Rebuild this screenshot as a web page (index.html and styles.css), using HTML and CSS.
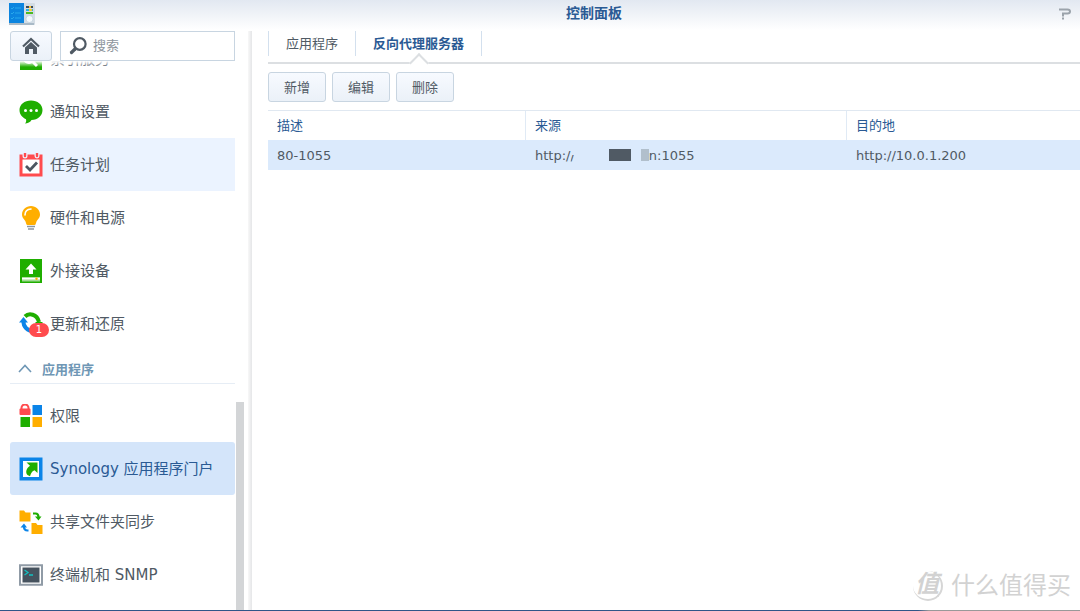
FILE: index.html
```html
<!DOCTYPE html>
<html lang="zh-CN">
<head>
<meta charset="utf-8">
<title>控制面板</title>
<link rel="stylesheet" href="styles.css">
</head>
<body>
<div class="window">
  <header class="titlebar">
    <svg class="app-icon" viewBox="0 0 26 22" aria-hidden="true">
      <rect x="14" width="12" height="22" rx="1" fill="#d3dce4"/>
      <rect width="15" height="21" fill="#0b84df"/>
      <rect y="20" width="25" height="2" fill="#a9bac7"/>
      <path d="M2 5l1 1 2-2M2 10l1 1 2-2M2 15l1 1 2-2M6 5h6M6 10h6M6 15h6" fill="none" stroke="#35b8f2" stroke-width=".7"/>
      <path d="M17 4h7" stroke="#3c4a57" stroke-width="2"/>
      <path d="M17 7h7" stroke="#27b4e8" stroke-width="2"/>
      <path d="M17 10h7" stroke="#4dba22" stroke-width="2"/>
      <path d="M20 4h2M20 7h3" stroke="#ffc52e" stroke-width="2"/>
      <circle cx="20.500" cy="16" r="3.500" fill="#f5f9fc" stroke="#b4c7d6" stroke-width=".6"/>
    </svg>
    <h1 class="title">控制面板</h1>
    <button class="help" type="button" aria-label="帮助">
      <svg viewBox="0 0 13 12" aria-hidden="true"><path d="M1 1.500h8.500Q12 1.500 12 3.500T9.500 5.500H5V8.500M5 9.500V11.500" fill="none" stroke="#9ba3ab" stroke-width="2"/></svg>
    </button>
  </header>

  <div class="body">
    <aside class="sidebar">
      <div class="search-row">
        <button class="btn home" type="button" aria-label="主页">
          <svg viewBox="0 0 18 18" aria-hidden="true"><path d="M1 9.500L9 2l8 7.500" fill="none" stroke="#505a64" stroke-width="2.200"/><path d="M3 10.500L9 5l6 5.500V17h-4v-5H7v5H3z" fill="#505a64"/></svg>
        </button>
        <label class="search">
          <svg viewBox="0 0 18 18" aria-hidden="true"><circle cx="10.800" cy="7" r="5.800" fill="none" stroke="#505a64" stroke-width="2.200"/><path d="M6 12L2.500 15.500" stroke="#505a64" stroke-width="3.200" stroke-linecap="round"/></svg>
          <input type="search" placeholder="搜索" aria-label="搜索">
        </label>
      </div>

      <nav class="nav">
        <a class="item" href="#">
          <svg viewBox="0 0 24 24" aria-hidden="true"><rect x="1" y="1" width="22" height="22" fill="#1fae00"/><circle cx="10" cy="11" r="6" fill="#fff"/><path d="M14 15l4 4" stroke="#fff" stroke-width="3"/></svg>
          <span>索引服务</span>
        </a>
        <a class="item" href="#">
          <svg viewBox="0 0 24 24" aria-hidden="true"><path d="M12 .500c6.500 0 11.500 4 11.500 9.500S19 20 12.500 20c-1 2-4 3.500-6.500 3.500 1-1 1.500-2.500 1-4.300C3 17.500.500 14 .500 10 .500 4.500 5.500.500 12 .500z" fill="#1fae00"/><g fill="#fff"><circle cx="6.500" cy="10.500" r="1.500"/><circle cx="12" cy="10.500" r="1.500"/><circle cx="17.500" cy="10.500" r="1.500"/></g></svg>
          <span>通知设置</span>
        </a>
        <a class="item hover" href="#">
          <svg viewBox="0 0 24 24" aria-hidden="true"><path d="M.500 1.500h23v22H.500z" fill="#ff4b4e"/><path d="M3.500 6.500h17v14h-17z" fill="#fff"/><path d="M3.500 0h5v3a2.500 2.500 0 0 1-5 0zM15.500 0h5v3a2.500 2.500 0 0 1-5 0z" fill="#ebf3ff"/><path d="M6 0v3M18 0v3" stroke="#ff4b4e" stroke-width="2.400" stroke-linecap="round"/><path d="M7 13l4 4 7-7.500" fill="none" stroke="#4c5661" stroke-width="2.800"/></svg>
          <span>任务计划</span>
        </a>
        <a class="item" href="#">
          <svg viewBox="0 0 24 24" aria-hidden="true"><path d="M12 0c5 0 9 3.700 9 8.500 0 3.500-2.500 5-3.500 7-.700 1.500-.500 3.500-2 3.500h-7c-1.500 0-1.300-2-2-3.500C5.500 13.500 3 12 3 8.500 3 3.700 7 0 12 0z" fill="#ffae00"/><path d="M6 9c0-3.500 2.500-5.800 6-6" fill="none" stroke="#fff" stroke-width="1.600" stroke-linecap="round"/><path d="M8 20.500h8M9 23h6" stroke="#8c96a0" stroke-width="1.500"/></svg>
          <span>硬件和电源</span>
        </a>
        <a class="item" href="#">
          <svg viewBox="0 0 24 24" aria-hidden="true"><path d="M1 0h22v24H1z" fill="#1fae00"/><path d="M12 4.500l5.500 6H14V15h-4v-4.500H6.500z" fill="#fff"/><path d="M3 18.500h18v4H3z" fill="#a1db93"/><path d="M3 18.500h18v2H3z" fill="#fff"/><circle cx="17.500" cy="19.800" r="1.200" fill="#ffae00"/></svg>
          <span>外接设备</span>
        </a>
        <a class="item" href="#">
          <span class="badged">
            <svg viewBox="0 0 24 24" aria-hidden="true"><path d="M6 4.500C10 .500 18 2 20 10" fill="none" stroke="#1fae00" stroke-width="4"/><path d="M16 10h8l-4 4z" fill="#1fae00"/><path d="M4.500 9c-.500 6 4.500 10 9.500 10" fill="none" stroke="#0b84e8" stroke-width="4"/><path d="M0 10.500L4.500 5 9 10.500z" fill="#0b84e8"/></svg>
            <b class="badge">1</b>
          </span>
          <span>更新和还原</span>
        </a>
        <button class="group" type="button" aria-expanded="true">
          <svg viewBox="0 0 14 9" aria-hidden="true"><path d="M1 8l6-6.500L13 8" fill="none" stroke="#6f97b5" stroke-width="1.600"/></svg>
          <span>应用程序</span>
        </button>
        <a class="item" href="#">
          <svg viewBox="0 0 24 24" aria-hidden="true"><path d="M2.500 6V4a3.500 3.500 0 0 1 7 0v2" fill="none" stroke="#ff4b4e" stroke-width="2"/><rect x=".500" y="4.500" width="11" height="6.500" rx="1" fill="#ff4b4e"/><path d="M13.500 1H23v10h-9.500z" fill="#0b84e8"/><path d="M1.500 13H11v10H1.500z" fill="#1fae00"/><path d="M13.500 13H23v10h-9.500z" fill="#ffae00"/></svg>
          <span>权限</span>
        </a>
        <a class="item selected" href="#" aria-current="page">
          <svg viewBox="0 0 24 24" aria-hidden="true"><path d="M.500.500h23v23H.500z" fill="#0b84e8"/><path d="M4 4h16v16H4z" fill="#fff"/><path d="M7.500 5.500H18.500V16l-3-2.800c-3 1.300-3.500 3.300-4.500 6L8.500 18c-2.500-2.500-1-7 2.500-9.300z" fill="#1fae00"/></svg>
          <span>Synology 应用程序门户</span>
        </a>
        <a class="item" href="#">
          <svg viewBox="0 0 24 24" aria-hidden="true"><path d="M.500.500H5l1.500 2h5v9h-11zM12.500 13H17l1.500 2h5v9h-11z" fill="#ffae00"/><path d="M14 3.500h2.500q3 0 3 4" fill="none" stroke="#1fae00" stroke-width="2.200"/><path d="M16 6.500h6.500L19.500 10.500z" fill="#1fae00"/><path d="M9.500 20.500h-1q-3.500 0-3.500-4" fill="none" stroke="#0b84e8" stroke-width="2.200"/><path d="M1.500 17.500h6.500L5 13.500z" fill="#0b84e8"/></svg>
          <span>共享文件夹同步</span>
        </a>
        <a class="item" href="#">
          <svg viewBox="0 0 24 24" aria-hidden="true"><path d="M1 2.200h22v19.500H1z" fill="#fff" stroke="#909ba6" stroke-width="2"/><path d="M3.500 4.500h17v15h-17z" fill="#46525e"/><path d="M5.500 7l3.500 2.500L5.500 12M10 12h4" fill="none" stroke="#13c0c0" stroke-width="1.300"/></svg>
          <span>终端机和 SNMP</span>
        </a>
      </nav>
      <div class="scroll-thumb"></div>
    </aside>

    <main class="main">
      <div class="tabs" role="tablist">
        <button class="tab" type="button" role="tab">应用程序</button>
        <button class="tab active" type="button" role="tab" aria-selected="true">反向代理服务器</button>
      </div>
      <div class="toolbar">
        <button class="btn" type="button">新增</button>
        <button class="btn" type="button">编辑</button>
        <button class="btn" type="button">删除</button>
      </div>
      <table class="grid">
        <colgroup><col class="col-desc"><col class="col-source"><col></colgroup>
        <thead><tr><th>描述</th><th>来源</th><th>目的地</th></tr></thead>
        <tbody><tr>
          <td>80-1055</td>
          <td><span class="masked"><span>http:/<span class="cut">/</span></span><i class="mask dark"></i><i class="mask light"></i><span>n:1055</span></span></td>
          <td>http://10.0.1.200</td>
        </tr></tbody>
      </table>
    </main>
  </div>
  <div class="watermark"><span class="seal">值</span><span>什么值得买</span></div>
</div>
</body>
</html>
```
FILE: styles.css
```css
* {
  box-sizing: border-box;
}

body {
  margin: 0;
  font-family: "DejaVu Sans", "Noto Sans CJK SC", sans-serif;
  font-size: 13px;
  color: #505a64;
}

button,
input {
  font: inherit;
  color: inherit;
}

a {
  color: inherit;
  text-decoration: none;
}

svg {
  display: block;
  flex: none;
}

.window {
  position: relative;
  display: flex;
  flex-direction: column;
  height: 100vh;
  overflow: hidden;
  background: linear-gradient(#e2e8f1, #fff 30px);
}

.window::after {
  content: "";
  flex: none;
  height: 1px;
  background: linear-gradient(90deg, #2f5688 85%, #999 86%);
}

.titlebar {
  display: grid;
  grid-template-columns: 1fr auto 1fr;
  align-items: center;
  height: 27px;
  padding: 0 9px;
}

.app-icon {
  width: 26px;
  height: 22px;
}

.title {
  margin: 0 0 0 108px;
  padding-bottom: 2px;
  font-size: 14px;
  line-height: 20px;
  color: #2a5a94;
}

.help {
  justify-self: end;
  padding: 0;
  border: 0;
  background: none;
}

.help svg {
  width: 13px;
  height: 12px;
}

.body {
  display: flex;
  flex: 1;
  min-height: 0;
  padding-top: 4px;
}

.sidebar {
  position: relative;
  display: flex;
  flex-direction: column;
  flex: none;
  width: 252px;
  padding: 0 17px 0 10px;
}

.sidebar::after {
  content: "";
  position: absolute;
  inset: 0 0 0 auto;
  width: 4px;
  background: linear-gradient(90deg, #f8f8f8, #e5e6e8);
}

.search-row {
  display: flex;
  gap: 8px;
  height: 30px;
}

.btn {
  height: 30px;
  padding: 0 15px 2px;
  border: 1px solid #c8d5e1;
  border-radius: 3px;
  background: linear-gradient(#f7faff, #ebf1f8);
}

.home {
  width: 42px;
  padding: 0 11px;
}

.home svg,
.search svg {
  width: 18px;
  height: 18px;
}

.search {
  display: flex;
  flex: 1;
  align-items: center;
  gap: 6px;
  min-width: 0;
  padding: 0 8px;
  border: 1px solid #c8d5e1;
  background: #fff;
}

.search input {
  flex: 1;
  min-width: 0;
  padding: 0 0 2px;
  border: 0;
  outline: 0;
  background: none;
}

.search input::placeholder {
  color: #8d959d;
}

.nav {
  position: relative;
  display: flex;
  flex: 1;
  flex-direction: column;
  justify-content: flex-end;
  min-height: 0;
  padding-bottom: 9px;
  overflow: hidden;
}

.nav::before {
  content: "";
  position: absolute;
  inset: 0 0 auto;
  z-index: 1;
  height: 6px;
  background: linear-gradient(#fff, #fff0);
}

.item {
  display: flex;
  flex: none;
  align-items: center;
  gap: 7px;
  height: 53px;
  padding-left: 9px;
  font-size: 15px;
  white-space: nowrap;
}

.item > span:last-child {
  padding-bottom: 2px;
}

.item svg {
  width: 24px;
  height: 24px;
}

.hover {
  background: #ebf3ff;
}

.selected {
  border-radius: 3px;
  background: #d4e5fa;
  color: #2a5a94;
}

.badged {
  position: relative;
}

.badge {
  position: absolute;
  top: 11px;
  left: 10px;
  width: 20px;
  border-radius: 7px;
  background: #ff4b4e;
  color: #fff;
  font-size: 10px;
  font-weight: 400;
  line-height: 14px;
  text-align: center;
}

.group {
  display: flex;
  flex: none;
  align-items: center;
  gap: 10px;
  height: 34px;
  margin-bottom: 5px;
  padding: 4px 0 0 8px;
  border: 0;
  border-bottom: 1px solid #e6edf5;
  background: none;
  color: #6f97b5;
  font-weight: 700;
}

.group svg {
  width: 14px;
  height: 9px;
}

.scroll-thumb {
  position: absolute;
  right: 8px;
  bottom: 0;
  width: 8px;
  height: 36%;
  background: #d3d5d7;
}

.main {
  flex: 1;
  min-width: 0;
  padding-left: 16px;
}

.tabs {
  display: flex;
  height: 33px;
  padding-bottom: 6px;
  border-bottom: 2px solid #dcdfe2;
}

.tab {
  position: relative;
  padding: 0 17px 2px;
  border: 0;
  border-right: 1px solid #d3e0ee;
  background: none;
}

.tab:first-child {
  border-left: 1px solid #d3e0ee;
}

.active {
  color: #2a5a94;
  font-weight: 700;
}

.active::after {
  content: "";
  position: absolute;
  bottom: -14px;
  left: 50%;
  width: 12px;
  height: 12px;
  border: solid #dcdfe2;
  border-width: 2px 0 0 2px;
  background: #fff;
  transform: translateX(-50%) rotate(45deg);
}

.toolbar {
  position: relative;
  display: flex;
  gap: 6px;
  padding: 8px 0;
}

.grid {
  width: 100%;
  border-collapse: separate;
  border-spacing: 0;
  border-top: 1px solid #e0e8f1;
  table-layout: fixed;
}

.col-desc {
  width: 258px;
}

.col-source {
  width: 321px;
}

.grid th,
.grid td {
  padding: 0 9px;
  text-align: left;
  white-space: nowrap;
}

.grid th {
  height: 29px;
  padding-bottom: 2px;
  border-right: 1px solid #e0eaf5;
  color: #2a5a94;
  font-weight: 400;
}

.grid th:last-child {
  border-right: 0;
}

.grid td {
  height: 30px;
  background: #dbeafc;
}

.masked {
  display: flex;
  align-items: center;
}

.cut {
  display: inline-block;
  clip-path: inset(50% 0 0 0);
}

.mask {
  height: 12px;
}

.dark {
  width: 22px;
  margin: 0 10px 0 34px;
  background: #505a64;
}

.light {
  width: 8px;
  background: #b1bfcc;
}

.watermark {
  position: absolute;
  right: 9px;
  bottom: 7px;
  display: flex;
  align-items: center;
  gap: 8px;
  color: #d2d2d2;
  font-size: 24px;
  line-height: 36px;
}

.seal {
  width: 30px;
  height: 30px;
  border: solid #d6d6d6;
  border-width: 0 2px 2px 0;
  border-radius: 50%;
  font-size: 24px;
  font-weight: 700;
  font-style: italic;
  line-height: 26px;
  text-align: center;
}
```
